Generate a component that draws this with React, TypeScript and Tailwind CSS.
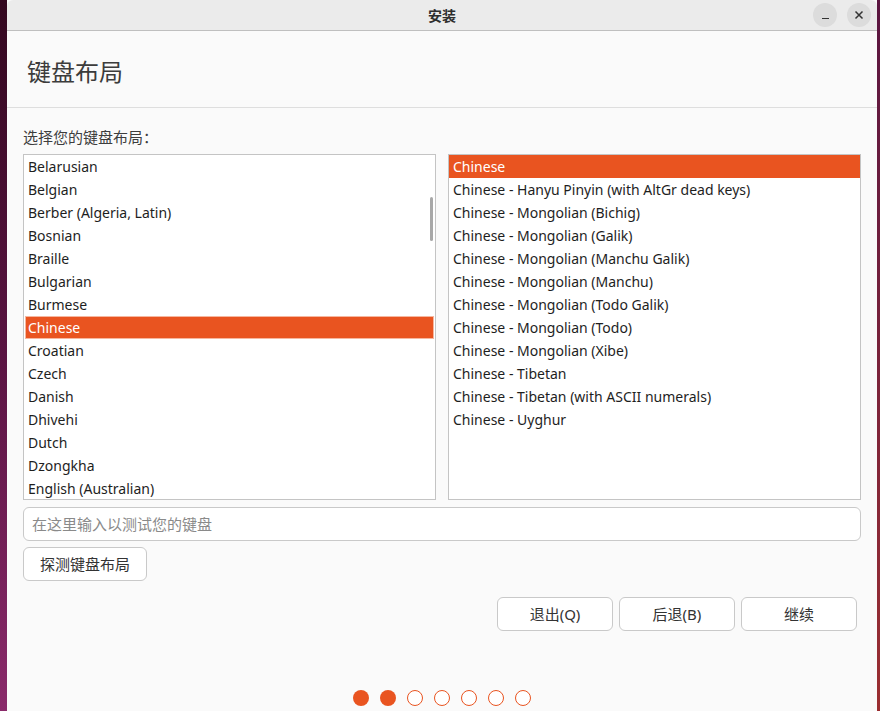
import React from 'react'

const left = [
  'Belarusian',
  'Belgian',
  'Berber (Algeria, Latin)',
  'Bosnian',
  'Braille',
  'Bulgarian',
  'Burmese',
  'Chinese',
  'Croatian',
  'Czech',
  'Danish',
  'Dhivehi',
  'Dutch',
  'Dzongkha',
  'English (Australian)',
]

const right = [
  'Chinese',
  'Chinese - Hanyu Pinyin (with AltGr dead keys)',
  'Chinese - Mongolian (Bichig)',
  'Chinese - Mongolian (Galik)',
  'Chinese - Mongolian (Manchu Galik)',
  'Chinese - Mongolian (Manchu)',
  'Chinese - Mongolian (Todo Galik)',
  'Chinese - Mongolian (Todo)',
  'Chinese - Mongolian (Xibe)',
  'Chinese - Tibetan',
  'Chinese - Tibetan (with ASCII numerals)',
  'Chinese - Uyghur',
]

const font = "font-['Noto_Sans','Noto_Sans_CJK_SC',sans-serif]"

function Row({ label, selected, inset }: { label: string; selected: boolean; inset?: boolean }) {
  if (selected) {
    return (
      <div
        className={`h-[23px] flex items-center bg-[#e95420] text-white ${
          inset ? 'mx-[1px] pl-[2px] border border-[#f6b79f]' : 'pl-[4px]'
        }`}
      >
        {label}
      </div>
    )
  }
  return <div className="h-[23px] flex items-center pl-[4px] text-[#1e1e1e]">{label}</div>
}

export default function App() {
  const dots = [true, true, false, false, false, false, false]
  return (
    <div className={`flex w-[880px] h-[711px] overflow-hidden ${font}`}>
      <div className="w-[7px] shrink-0 bg-gradient-to-b from-[#33081f] via-[#5a1442] to-[#8a2a6a]" />
      <div className="flex-1 flex flex-col bg-[#fafafa]">
        <div className="h-[31px] shrink-0 bg-[#ebebeb] border-b border-[#bfbfbf] flex items-center relative rounded-t-[6px]">
          <div className="flex-1 text-center text-[14px] font-bold text-[#2e2e2e]">安装</div>
          <div className="absolute right-[6px] top-[3px] flex gap-[10px]">
            <div className="w-[24px] h-[24px] rounded-full bg-[#dcdcdc] flex items-end justify-center pb-[8px]">
              <div className="w-[7px] h-[1.5px] bg-[#333]" />
            </div>
            <div className="w-[24px] h-[24px] rounded-full bg-[#dcdcdc] flex items-center justify-center">
              <svg width="10" height="10" viewBox="0 0 10 10">
                <path d="M1.5 1.5 L8.5 8.5 M8.5 1.5 L1.5 8.5" stroke="#333" strokeWidth="1.5" />
              </svg>
            </div>
          </div>
        </div>

        <div className="h-[77px] shrink-0 flex items-center pl-[20px] border-b border-[#dedede]">
          <div className="text-[24px] text-[#3c3c3c] mt-[6px]">键盘布局</div>
        </div>

        <div className="px-[16px] pt-[19px] text-[14px]">
          <div className="text-[15px] text-[#3d3d3d] leading-[20px] mb-[7px]">选择您的键盘布局：</div>
          <div className="flex gap-[12px]">
            <div className="relative w-[413px] h-[346px] border border-[#c4c4c4] bg-white overflow-hidden">
              {left.map((l) => (
                <Row key={l} label={l} selected={l === 'Chinese'} inset />
              ))}
              <div className="absolute right-[2px] top-[42px] w-[3px] h-[44px] rounded bg-[#a8a8a8]" />
            </div>
            <div className="w-[413px] h-[346px] border border-[#c4c4c4] bg-white overflow-hidden">
              {right.map((l, i) => (
                <Row key={l} label={l} selected={i === 0} />
              ))}
            </div>
          </div>

          <div className="mt-[7px] h-[34px] rounded-[6px] border border-[#c9c9c9] bg-white flex items-center pl-[8px] text-[15px] text-[#8a8a8a]">
            在这里输入以测试您的键盘
          </div>

          <div className="mt-[6px] w-[124px] h-[34px] rounded-[6px] border border-[#c9c9c9] bg-white flex items-center justify-center text-[15px] text-[#333]">
            探测键盘布局
          </div>

          <div className="mt-[16px] flex justify-end gap-[6px] pr-[4px]">
            {['退出(Q)', '后退(B)', '继续'].map((b) => (
              <div
                key={b}
                className="w-[116px] h-[34px] rounded-[6px] border border-[#c9c9c9] bg-white flex items-center justify-center text-[15px] text-[#333]"
              >
                {b}
              </div>
            ))}
          </div>
        </div>

        <div className="mt-auto mb-[5px] flex justify-center gap-[11px]">
          {dots.map((f, i) => (
            <div
              key={i}
              className={`w-[16px] h-[16px] rounded-full ${
                f ? 'bg-[#e95420]' : 'border-[1.5px] border-[#e95420] bg-white'
              }`}
            />
          ))}
        </div>
      </div>
      <div className="w-[3px] shrink-0 bg-gradient-to-b from-[#5a1540] to-[#9a2e30]" />
    </div>
  )
}
